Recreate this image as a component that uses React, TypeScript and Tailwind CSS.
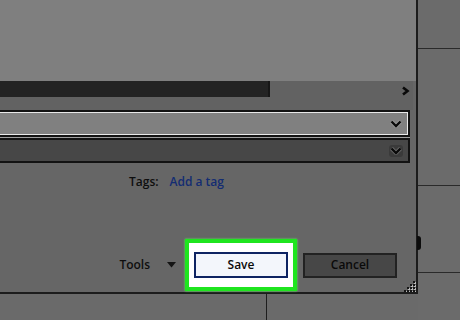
import React from "react";

const ChevronDown: React.FC<{}> = () => (
  <svg width="12" height="8" viewBox="0 0 12 8" className="block">
    <polyline points="1.5,1.5 6,6 10.5,1.5" fill="none" stroke="#c8c8c8" strokeWidth="4" strokeLinejoin="miter" opacity="0.35" />
    <polyline points="1.5,1.5 6,6 10.5,1.5" fill="none" stroke="#0a0a0a" strokeWidth="2.4" strokeLinejoin="miter" />
  </svg>
);

const Grip: React.FC<{}> = () => (
  <svg width="12" height="12" viewBox="0 0 12 12" className="block">
    {[
      [9, 1],
      [6, 4],
      [9, 4],
      [3, 7],
      [6, 7],
      [9, 7],
      [0, 10],
      [3, 10],
      [6, 10],
      [9, 10],
    ].map(([x, y], i) => (
      <g key={i}>
        <rect x={x + 1} y={y + 1} width="2" height="2" fill="#bdbdbd" />
        <rect x={x} y={y} width="2" height="2" fill="#161616" />
      </g>
    ))}
  </svg>
);

const App: React.FC<{}> = () => {
  return (
    <div className="w-[460px] h-[320px] overflow-hidden flex bg-[#6b6b6b] font-['Open_Sans','Liberation_Sans',Arial,sans-serif] text-[12px] font-semibold leading-[16px]">
      <div className="w-[418px] flex flex-col">
        {/* dialog */}
        <div className="relative h-[294px] border-r-2 border-b-2 border-[#1c1c1c] bg-[#666666] flex flex-col">
          <div className="h-[81px] bg-[#7f7f7f]" />

          <div className="h-[29px] mr-[3px] bg-[#626262] flex items-start">
            <div className="w-[270px] h-[16px] bg-[#232323] border-r-2 border-[#161616]" />
            <div className="flex-1" />
            <svg width="9" height="10" viewBox="0 0 9 10" className="block mt-[5px] mr-[3px]">
              <polyline points="2,1.5 6.5,5 2,8.5" fill="none" stroke="#0a0a0a" strokeWidth="2.6" />
            </svg>
          </div>

          <div className="mr-[6px] h-[27px] border-y-2 border-r-2 border-[#121212] bg-[#808080] shadow-[inset_0_1px_0_#e8e8e8,inset_0_-1px_0_#e8e8e8,inset_-1px_0_0_#e8e8e8] flex items-center justify-end pr-[6px]">
            <ChevronDown />
          </div>

          <div className="mt-px mr-[6px] h-[25px] border-y-2 border-r-2 border-[#121212] bg-[#474747] shadow-[0_-1px_0_#a0a0a0] flex items-center justify-end pr-[5px]">
            <div className="rounded-[3px] bg-[#3a3a3a] px-px py-[2px]">
              <ChevronDown />
            </div>
          </div>

          <div className="mt-[11px] pl-[129px] flex items-center gap-[11px]">
            <span className="text-[#0e0e0e]">Tags:</span>
            <span className="text-[#132c72]">Add a tag</span>
          </div>

          <div className="mt-auto mb-px pr-[19px] flex items-center justify-end">
            <span className="text-[#0e0e0e]">Tools</span>
            <svg width="9" height="6" viewBox="0 0 9 6" className="block ml-[17px] mr-[9px]">
              <polygon points="0,0 9,0 4.5,5.5" fill="#141414" />
            </svg>
            <div className="border-[4px] border-[#1fe51f] bg-white px-[5px] py-[9px] shadow-[0_0_2px_#5cf05c]">
              <div className="w-[94px] h-[26px] border-2 border-[#0e2462] bg-[#f3f6fb] flex items-center justify-center text-[#0a0a0a]">
                Save
              </div>
            </div>
            <div className="ml-[6px] w-[94px] h-[25px] border-2 border-[#222222] bg-[#474747] flex items-center justify-center text-[#0a0a0a]">
              Cancel
            </div>
          </div>

          <div className="absolute bottom-0 right-0">
            <Grip />
          </div>
          <div className="absolute top-[236px] right-[-5px] w-[4px] h-[14px] rounded-r-[3px] bg-[#0c0c0c]" />
        </div>

        {/* area below the dialog */}
        <div className="flex-1 bg-[#6a6a6a]">
          <div className="ml-[266px] h-full border-l border-[#1e1e1e]" />
        </div>
      </div>

      {/* strip on the right */}
      <div className="flex-1 flex flex-col bg-[#6b6b6b]">
        <div className="h-[49px] border-b border-[#2a2a2a]" />
        <div className="h-[137px] border-b border-[#2a2a2a]" />
        <div className="h-[87px] border-b border-[#2a2a2a]" />
        <div className="flex-1" />
      </div>
    </div>
  );
};

export default App;
